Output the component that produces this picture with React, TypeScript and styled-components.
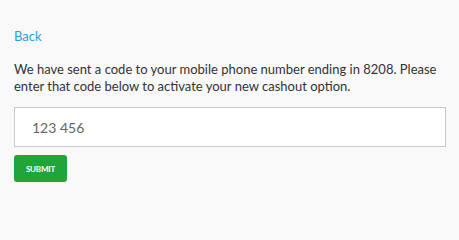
import styled, { createGlobalStyle } from 'styled-components';

const GlobalStyle = createGlobalStyle`
	html, body {
		margin: 0;
		padding: 0;
		background-color: #f9f9f9;
	}
	body {
		font-family: Lato, "Open Sans", sans-serif;
	}
`;

const App = () => {
	return (
		<>
			<GlobalStyle />
			<Container>
				<BackLink href="#">Back</BackLink>
				<Message>
					We have sent a code to your mobile phone number ending in 8208. Please
					enter that code below to activate your new cashout option.
				</Message>
				<CodeInput type="text" defaultValue="123 456" />
				<SubmitButton>Submit</SubmitButton>
			</Container>
		</>
	);
};

export default App;

const Container = styled.div`
	width: 459px;
	height: 209px;
	box-sizing: border-box;
	padding: 28px 13px 0 14px;
	display: flex;
	flex-direction: column;
	align-items: flex-start;
`;

const BackLink = styled.a`
	font-size: 13px;
	line-height: 17px;
	color: #2a9fd8;
	text-decoration: none;
`;

const Message = styled.p`
	margin: 16px 0 0;
	font-size: 13px;
	line-height: 17px;
	color: #333;
`;

const CodeInput = styled.input`
	margin-top: 12px;
	width: 100%;
	height: 40px;
	box-sizing: border-box;
	padding: 0 17px;
	border: 1px solid #c8c8c8;
	border-radius: 0;
	background-color: #fff;
	font-family: Lato, "Open Sans", sans-serif;
	font-size: 14px;
	color: #666;
	outline: none;
`;

const SubmitButton = styled.button`
	margin-top: 8px;
	width: 53px;
	height: 27px;
	padding: 0;
	border: none;
	border-radius: 3px;
	background-color: #1fa637;
	color: #fff;
	font-family: Lato, "Open Sans", sans-serif;
	font-size: 8px;
	font-weight: 700;
	text-transform: uppercase;
	letter-spacing: -0.2px;
`;
